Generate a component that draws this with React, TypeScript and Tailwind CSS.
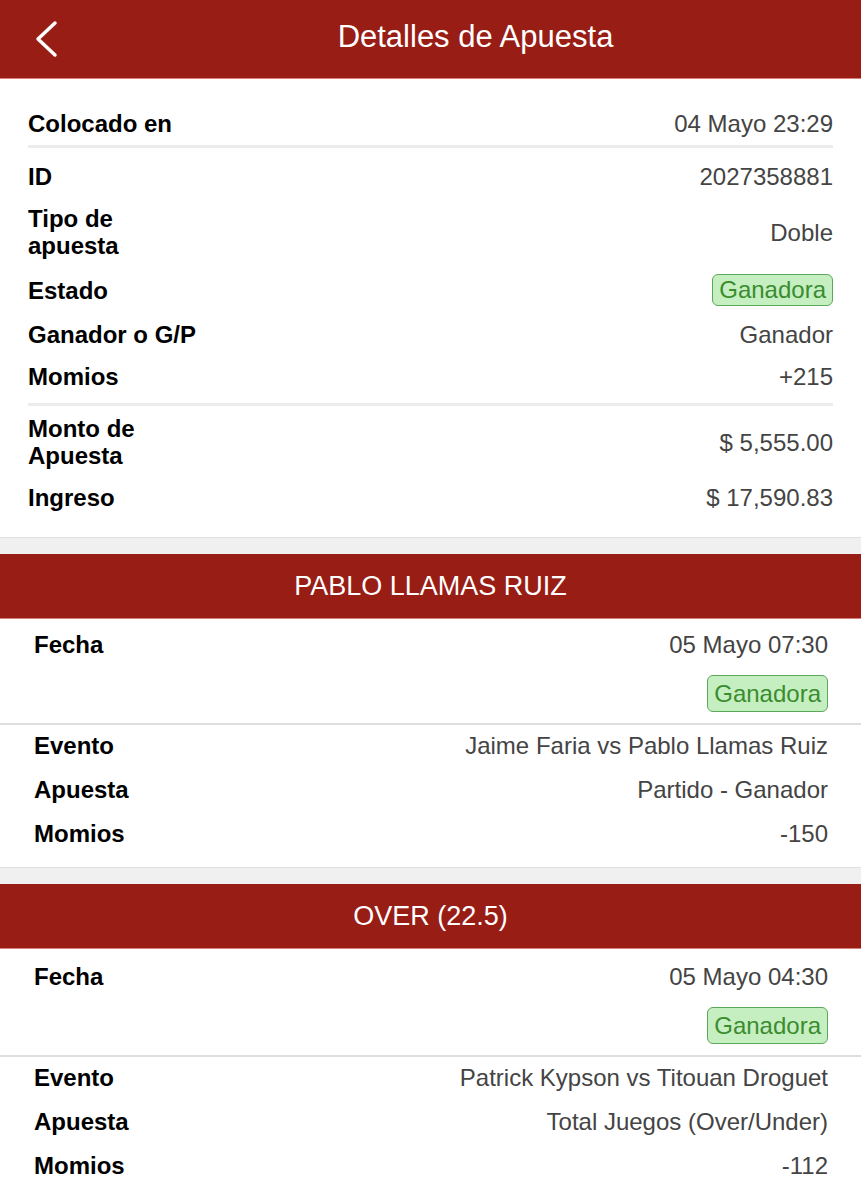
import React from "react";

const RED = "bg-[#981d15]";

function Badge({ tall }: { tall?: boolean }) {
    return (
        <span
            className={`inline-block rounded-[6px] border-[1.5px] border-[#5ba85a] bg-[#c6efc1] px-[6px] text-[24px] text-[#3a8c2f] ${tall ? "leading-[35px]" : "leading-[30px]"}`}
        >
            Ganadora
        </span>
    );
}

function Row({ label, children }: { label: React.ReactNode; children: React.ReactNode }) {
    return (
        <div className="flex items-center justify-between">
            <div className="text-[24px] font-bold leading-[27px] text-black">{label}</div>
            <div className="text-right text-[24px] leading-[27px] text-[#444]">{children}</div>
        </div>
    );
}

function Divider() {
    return <div className="h-[3px] bg-[#ececec]" />;
}

function BetCard({ title, fecha, evento, apuesta, momios, top }: {
    title: string,
    fecha: string,
    evento: string,
    apuesta: string,
    momios: string,
    top?: boolean
}) {
    return (
        <section>
            <div className={`flex h-[65px] items-center justify-center border-b border-[#d98177] ${RED} text-[27px] text-white`}>
                {title}
            </div>
            <div className="bg-white">
                <div className={`pl-[34px] pr-[33px] pb-[11px] ${top ? "pt-[12px]" : "pt-[14px]"}`}>
                    <Row label="Fecha">{fecha}</Row>
                    <div className="mt-[17px] flex justify-end">
                        <Badge tall />
                    </div>
                </div>
                <div className="h-[2px] bg-[#dedede]" />
                <div className="flex flex-col gap-[17px] pl-[34px] pr-[33px] pt-[7px] pb-[20px]">
                    <Row label="Evento">{evento}</Row>
                    <Row label="Apuesta">{apuesta}</Row>
                    <Row label="Momios">{momios}</Row>
                </div>
            </div>
        </section>
    );
}

function Gap() {
    return <div className="h-[17px] border-t border-[#e0e0e0] bg-[#f0f0f0]" />;
}

export default function App() {
    return (
        <div className="min-h-[1199px] bg-white font-['Liberation_Sans',Arial,sans-serif]">
            {/* Header */}
            <header className={`flex h-[79px] items-center border-b border-[#d98177] ${RED}`}>
                <div className="flex w-[90px] items-center pl-[33px]">
                    <svg width="26" height="38" viewBox="0 0 26 38" fill="none">
                        <path d="M22 3 L5 19 L22 35" stroke="white" strokeWidth="3.5" strokeLinecap="round" strokeLinejoin="round" />
                    </svg>
                </div>
                <h1 className="flex-1 pb-[4px] text-center text-[31px] text-white">Detalles de Apuesta</h1>
            </header>

            {/* Resumen */}
            <div className="bg-white pl-[28px] pr-[28px] pt-[31px] pb-[26px]">
                <Row label="Colocado en">04 Mayo 23:29</Row>
                <div className="mt-[8px] mb-[15px]"><Divider /></div>
                <div className="flex flex-col gap-[15px]">
                    <Row label="ID">2027358881</Row>
                    <Row label={<>Tipo de<br />apuesta</>}>Doble</Row>
                    <Row label="Estado"><Badge /></Row>
                    <Row label="Ganador o G/P">Ganador</Row>
                    <Row label="Momios">+215</Row>
                </div>
                <div className="mt-[13px] mb-[9px]"><Divider /></div>
                <div className="flex flex-col gap-[15px]">
                    <Row label={<>Monto de<br />Apuesta</>}>$ 5,555.00</Row>
                    <Row label="Ingreso">$ 17,590.83</Row>
                </div>
            </div>

            <Gap />
            <BetCard
                top
                title="PABLO LLAMAS RUIZ"
                fecha="05 Mayo 07:30"
                evento="Jaime Faria vs Pablo Llamas Ruiz"
                apuesta="Partido - Ganador"
                momios="-150"
            />
            <Gap />
            <BetCard
                title="OVER (22.5)"
                fecha="05 Mayo 04:30"
                evento="Patrick Kypson vs Titouan Droguet"
                apuesta="Total Juegos (Over/Under)"
                momios="-112"
            />
        </div>
    );
}
